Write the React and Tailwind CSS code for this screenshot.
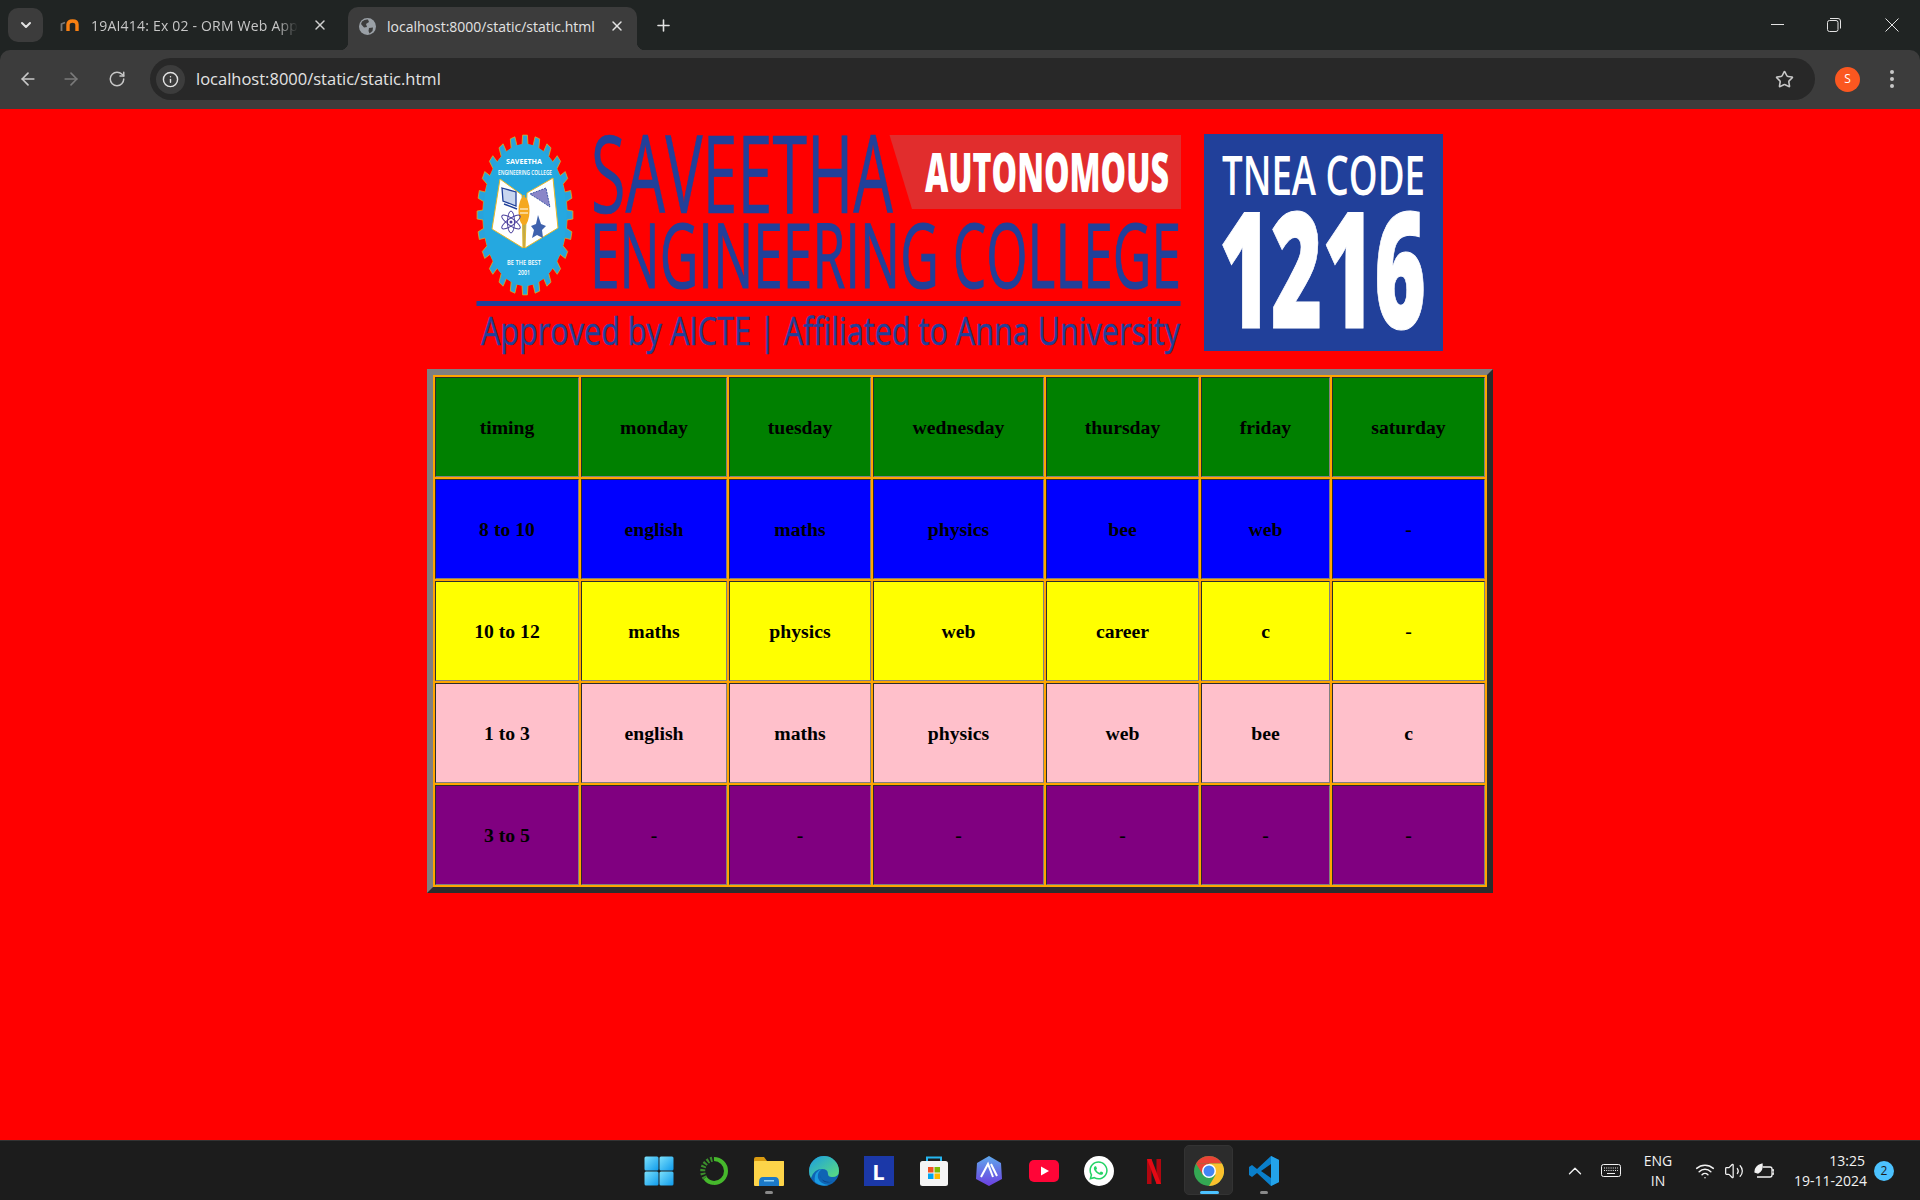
import React from 'react';
import {
  ArrowLeft,
  ArrowRight,
  ChevronDown,
  ChevronUp,
  Info,
  Plus,
  RotateCw,
  Star,
  Volume2,
  Wifi,
  X,
} from 'lucide-react';
import { FaWhatsapp } from 'react-icons/fa';

const BLUE = '#21409a';

const columns = ['w-[144px]', 'w-[146px]', 'w-[142px]', 'w-[171px]', 'w-[153px]', 'w-[129px]', 'w-[153px]'];

const rows = [
  { bg: 'bg-[#008000]', cells: ['timing', 'monday', 'tuesday', 'wednesday', 'thursday', 'friday', 'saturday'] },
  { bg: 'bg-[#0000ff]', cells: ['8 to 10', 'english', 'maths', 'physics', 'bee', 'web', '-'] },
  { bg: 'bg-[#ffff00]', cells: ['10 to 12', 'maths', 'physics', 'web', 'career', 'c', '-'] },
  { bg: 'bg-[#ffc0cb]', cells: ['1 to 3', 'english', 'maths', 'physics', 'web', 'bee', 'c'] },
  { bg: 'bg-[#800080]', cells: ['3 to 5', '-', '-', '-', '-', '-', '-'] },
];

// gear outline for the college crest, squashed like the stretched banner image
function gearPath(cx, cy, rx, ry, teeth) {
  const pts = [];
  for (let i = 0; i < teeth; i++) {
    const step = (Math.PI * 2) / teeth;
    const a = i * step - Math.PI / 2;
    const corners = [
      [a - step * 0.27, 0.88],
      [a - step * 0.19, 1],
      [a + step * 0.19, 1],
      [a + step * 0.27, 0.88],
    ];
    corners.forEach(([t, r]) => {
      pts.push(`${(cx + Math.cos(t) * rx * r).toFixed(1)},${(cy + Math.sin(t) * ry * r).toFixed(1)}`);
    });
  }
  return `M${pts.join('L')}Z`;
}

function Crest() {
  return (
    <g>
      <path d={gearPath(525, 215, 48, 80, 24)} fill="#29a3dc" stroke="#d8b020" strokeWidth="0.8" />
      <ellipse cx="525" cy="215" rx="42" ry="71" fill="#25a8e0" />
      <path d="M500 179 L522 195 L523 248 L492 229 Z" fill="#fff" stroke="#e8b82a" strokeWidth="1" />
      <path d="M527 193 L553 178 L558 228 L525 248 Z" fill="#fff" stroke="#e8b82a" strokeWidth="1" />
      <path d="M524 195 V248" stroke="#f2ab1e" strokeWidth="1.5" />
      <ellipse cx="524" cy="211" rx="5.5" ry="14" fill="#f5a81f" />
      <path d="M520 209 H528 M520 213 H528" stroke="#fff" strokeWidth="1.2" />
      {/* monitor */}
      <path d="M502 188 L516 192 V206 L503 201 Z" fill="#c9d6ef" stroke={BLUE} strokeWidth="1.3" />
      <path d="M504 204 L517 209" stroke={BLUE} strokeWidth="1.5" />
      {/* chip */}
      <path d="M530 194 L546 188 L550 207 L538 199 Z" fill="#8a86c8" stroke={BLUE} strokeWidth="0.8" strokeDasharray="2 1" />
      {/* atom */}
      <g fill="none" stroke="#4b3f9c" strokeWidth="1">
        <ellipse cx="511" cy="222" rx="3.5" ry="11" />
        <ellipse cx="511" cy="222" rx="3.5" ry="11" transform="rotate(55 511 222)" />
        <ellipse cx="511" cy="222" rx="3.5" ry="11" transform="rotate(-55 511 222)" />
      </g>
      <circle cx="511" cy="222" r="1.5" fill="#4b3f9c" />
      {/* star tower */}
      <path d="M538 215 L541 224 L546 226 L542 230 L543 238 L537 235 L532 238 L534 230 L531 226 L536 224 Z" fill="#3f62ad" />
      <text x="524" y="164" fontSize="7.5" fontWeight="700" fill="#fff" textAnchor="middle" textLength="36" lengthAdjust="spacingAndGlyphs">SAVEETHA</text>
      <text x="525" y="175" fontSize="6.5" fontWeight="600" fill="#fff" textAnchor="middle" textLength="54" lengthAdjust="spacingAndGlyphs">ENGINEERING COLLEGE</text>
      <text x="524" y="265" fontSize="7" fontWeight="600" fill="#fff" textAnchor="middle" textLength="34" lengthAdjust="spacingAndGlyphs">BE THE BEST</text>
      <text x="524" y="275" fontSize="6.5" fontWeight="600" fill="#fff" textAnchor="middle" textLength="12" lengthAdjust="spacingAndGlyphs">2001</text>
    </g>
  );
}

function Banner() {
  return (
    <svg
      viewBox="470 120 980 245"
      width="980"
      height="245"
      className="block font-['Open_Sans',sans-serif]"
    >
      <Crest />
      <polygon points="889.5,135 1181,135 1181,209 912,209" fill="#e12d2d" />
      <text x="591" y="213" fontSize="108" fontWeight="500" fill={BLUE} stroke={BLUE} strokeWidth="0.6" textLength="302" lengthAdjust="spacingAndGlyphs">SAVEETHA</text>
      <text x="590" y="288" fontSize="90" fontWeight="500" fill={BLUE} stroke={BLUE} strokeWidth="1" textLength="591" lengthAdjust="spacingAndGlyphs">ENGINEERING COLLEGE</text>
      <text x="925" y="192" fontSize="54" fontWeight="800" fill="#fff" textLength="244" lengthAdjust="spacingAndGlyphs">AUTONOMOUS</text>
      <rect x="476.5" y="301" width="704" height="5" fill={BLUE} />
      <text x="481" y="345" fontSize="39" fontWeight="500" fill={BLUE} stroke={BLUE} strokeWidth="0.5" textLength="699" lengthAdjust="spacingAndGlyphs">Approved by AICTE | Affiliated to Anna University</text>
      <rect x="1204" y="134" width="239" height="217" fill={BLUE} />
      <text x="1222" y="195" fontSize="54" fontWeight="600" fill="#fff" textLength="203" lengthAdjust="spacingAndGlyphs">TNEA CODE</text>
      <text x="1219" y="328" fontSize="161" fontWeight="800" fill="#fff" stroke="#fff" strokeWidth="1" textLength="207" lengthAdjust="spacingAndGlyphs">1216</text>
    </svg>
  );
}

function Timetable() {
  return (
    <table className="table-fixed w-[1066px] mx-auto border-separate border-spacing-[2px] bg-[#ffa500] border-[6px] border-[#808080] [border-style:outset] font-['Liberation_Serif',serif] text-[19.7px] font-bold text-black">
      <colgroup>
        {columns.map((c, i) => (
          <col key={i} className={c} />
        ))}
      </colgroup>
      <tbody>
        {rows.map((row, r) => (
          <tr key={r}>
            {row.cells.map((cell, c) => (
              <td
                key={c}
                className={`${row.bg} h-[100px] p-0 pt-[2px] text-center align-middle border border-[#808080] [border-style:inset]`}
              >
                {cell}
              </td>
            ))}
          </tr>
        ))}
      </tbody>
    </table>
  );
}

function MoodleIcon() {
  return (
    <svg viewBox="0 0 20 14" className="w-5 h-[14px]">
      <path d="M1.5 13 V6 L5 4.5" fill="none" stroke="#777" strokeWidth="1.8" />
      <path d="M8 13 V6.5 Q8 3 12.5 3 Q17 3 17 6.5 V13" fill="none" stroke="#f98012" strokeWidth="3.4" />
    </svg>
  );
}

function GlobeIcon() {
  return (
    <svg viewBox="0 0 17 17" className="ml-[11px] w-[17px] h-[17px]">
      <circle cx="8.5" cy="8.5" r="8.5" fill="#9aa0a6" />
      <path d="M3 3.5 Q6 1 9 1.5 L10 4 L7 6 L8 9 L5 9.5 L2 6 Z M10 10 L14 9.5 L13.5 13 L10.5 15.5 L9.5 13 Z" fill="#3c3c3c" />
    </svg>
  );
}

function TabBar() {
  return (
    <div className="flex h-[50px] bg-[#202423] text-[14px]">
      <div className="ml-2 mt-2 w-[35px] h-[34px] rounded-[10px] bg-[#3c3c3c] flex items-center justify-center">
        <ChevronDown size={16} strokeWidth={3} className="text-[#e3e3e3]" />
      </div>
      <div className="ml-[17px] w-[280px] h-[36px] mt-[7px] flex items-center text-[#c7c7c7]">
        <MoodleIcon />
        <span className="ml-[11px] w-[207px] whitespace-nowrap overflow-hidden tracking-[0.2px] [mask-image:linear-gradient(to_right,black_90%,transparent)]">
          19AI414: Ex 02 - ORM Web Application
        </span>
        <X size={16} strokeWidth={2.2} className="ml-[14px] text-[#d0d0d0]" />
      </div>
      <div className="relative ml-2 w-[289px] h-[43px] mt-[7px] pb-[5px] rounded-t-[10px] bg-[#3c3c3c] flex items-center text-[#e3e3e3]">
        <div className="absolute left-[-8px] bottom-0 w-2 h-2 bg-[radial-gradient(circle_at_0_0,#202423_8px,#3c3c3c_8.5px)]" />
        <div className="absolute right-[-8px] bottom-0 w-2 h-2 bg-[radial-gradient(circle_at_100%_0,#202423_8px,#3c3c3c_8.5px)]" />
        <GlobeIcon />
        <span className="ml-[11px] w-[210px] whitespace-nowrap overflow-hidden">localhost:8000/static/static.html</span>
        <X size={16} strokeWidth={2.2} className="ml-[12px] text-[#e3e3e3]" />
      </div>
      <div className="ml-[17px] mt-[15px] h-5 flex items-center">
        <Plus size={19} strokeWidth={2} className="text-[#e3e3e3]" />
      </div>
      <div className="ml-auto flex items-start pt-[18px] text-[#e3e3e3]">
        <div className="w-[13px] h-[13px] flex items-center">
          <div className="w-[13px] h-px bg-[#e3e3e3]" />
        </div>
        <svg viewBox="0 0 14 14" className="ml-[43px] w-[14px] h-[14px]" fill="none" stroke="currentColor" strokeWidth="1">
          <rect x="0.5" y="2.5" width="10.5" height="11" rx="2" />
          <path d="M3 0.5 H11 Q13.5 0.5 13.5 3 V10.5" />
        </svg>
        <svg viewBox="0 0 14 14" className="ml-[44px] mr-[21px] w-[14px] h-[14px]" fill="none" stroke="currentColor" strokeWidth="1">
          <path d="M0.5 0.5 L13.5 13.5 M13.5 0.5 L0.5 13.5" />
        </svg>
      </div>
    </div>
  );
}

function Toolbar() {
  return (
    <div className="bg-[#202423]">
      <div className="flex items-center h-[59px] pb-[1px] bg-[#3c3c3c] rounded-t-[10px] text-[#c7c7c7]">
        <ArrowLeft size={20} strokeWidth={2} className="ml-[18px]" />
        <ArrowRight size={20} strokeWidth={2} className="ml-[23px] text-[#7a7a7a]" />
        <RotateCw size={18} strokeWidth={2} className="ml-[27px]" />
        <div className="ml-[24px] w-[1665px] h-[42px] rounded-[21px] bg-[#282828] flex items-center">
          <div className="ml-[6px] w-[29px] h-[29px] rounded-full bg-[#3c3c3c] flex items-center justify-center">
            <Info size={17} strokeWidth={2} className="text-[#e3e3e3]" />
          </div>
          <span className="ml-[11px] text-[16.5px] text-[#e3e3e3] font-['Open_Sans',sans-serif]">localhost:8000/static/static.html</span>
          <Star size={19} strokeWidth={2} className="ml-auto mr-[21px] text-[#c7c7c7]" />
        </div>
        <div className="ml-[20px] w-[25px] h-[25px] rounded-full bg-[#fb5720] flex items-center justify-center text-[12px] text-white">S</div>
        <div className="ml-[30px] flex flex-col gap-[3px]">
          <div className="w-1 h-1 rounded-full bg-[#c7c7c7]" />
          <div className="w-1 h-1 rounded-full bg-[#c7c7c7]" />
          <div className="w-1 h-1 rounded-full bg-[#c7c7c7]" />
        </div>
      </div>
    </div>
  );
}

function WindowsIcon() {
  return (
    <svg viewBox="0 0 30 30" className="w-[30px] h-[30px]">
      <defs>
        <linearGradient id="winTile" x1="0" y1="0" x2="1" y2="1">
          <stop offset="0" stopColor="#7be0fb" />
          <stop offset="1" stopColor="#0f9bec" />
        </linearGradient>
      </defs>
      <rect x="0.5" y="0.5" width="14" height="14" rx="1.5" fill="url(#winTile)" />
      <rect x="15.5" y="0.5" width="14" height="14" rx="1.5" fill="url(#winTile)" />
      <rect x="0.5" y="15.5" width="14" height="14" rx="1.5" fill="url(#winTile)" />
      <rect x="15.5" y="15.5" width="14" height="14" rx="1.5" fill="url(#winTile)" />
    </svg>
  );
}

function RingIcon() {
  return (
    <svg viewBox="0 0 30 30" className="w-[30px] h-[30px]" fill="none">
      <path d="M15 3 A12 12 0 0 1 15 27" stroke="#46b82c" strokeWidth="4" />
      <path d="M15 27 A12 12 0 0 1 6 22" stroke="#46b82c" strokeWidth="4" />
      <path d="M6 22 A12 12 0 0 1 15 3" stroke="#3c8f2c" strokeWidth="5" strokeDasharray="2 1.6" />
    </svg>
  );
}

function FolderIcon() {
  return (
    <svg viewBox="0 0 30 30" className="w-[30px] h-[30px]">
      <path d="M0 3 Q0 1 2 1 H10 L13 5 H30 V10 H0 Z" fill="#d99a10" />
      <rect x="0" y="5" width="30" height="25" rx="1" fill="#fdd449" />
      <path d="M5 26 Q5 21 9 21 H21 Q25 21 25 26 V30 H5 Z" fill="#1b79c8" />
      <rect x="10" y="24" width="10" height="1.5" fill="#8fd0f5" />
    </svg>
  );
}

function EdgeIcon() {
  return (
    <svg viewBox="0 0 30 30" className="w-[30px] h-[30px]">
      <defs>
        <linearGradient id="edgeTop" x1="0" y1="0" x2="1" y2="1">
          <stop offset="0" stopColor="#1b9de2" />
          <stop offset="1" stopColor="#5ee07a" />
        </linearGradient>
      </defs>
      <circle cx="15" cy="15" r="15" fill="#0f64b4" />
      <path d="M0 15 A15 15 0 0 1 30 15 Q30 21 23 21 Q19 21 19 18 Q19 13 13 13 Q5 13 2 22 Q0 19 0 15 Z" fill="url(#edgeTop)" />
      <path d="M13 13 Q8 16 9 22 Q11 28 20 29 Q12 31 6 26 Q4 16 13 13 Z" fill="#1a9ae0" />
      <path d="M11 19 Q12 26 21 26 L24 25 Q14 30 11 19Z" fill="#0b3f80" />
    </svg>
  );
}

function LIcon() {
  return (
    <div className="w-[30px] h-[30px] bg-[#1b38a8] flex items-center justify-center text-white text-[22px] font-bold leading-none font-['Open_Sans',sans-serif]">L</div>
  );
}

function StoreIcon() {
  return (
    <svg viewBox="0 0 30 30" className="w-[30px] h-[30px]">
      <path d="M8 6 V1.5 H22 V6" fill="none" stroke="#25b6f0" strokeWidth="2" />
      <rect x="1" y="5" width="28" height="25" rx="2.5" fill="#f4f4f4" />
      <rect x="9" y="11" width="5.5" height="5.5" fill="#f25022" />
      <rect x="15.5" y="11" width="5.5" height="5.5" fill="#7fba00" />
      <rect x="9" y="17.5" width="5.5" height="5.5" fill="#00a4ef" />
      <rect x="15.5" y="17.5" width="5.5" height="5.5" fill="#ffb900" />
    </svg>
  );
}

function HexIcon() {
  return (
    <svg viewBox="0 0 30 30" className="w-[30px] h-[30px]">
      <defs>
        <linearGradient id="hexFill" x1="0" y1="0" x2="0" y2="1">
          <stop offset="0" stopColor="#5fa8ec" />
          <stop offset="1" stopColor="#6c3ee0" />
        </linearGradient>
      </defs>
      <polygon points="15,0 27,7 28,23 15,30 2,23 3,7" fill="url(#hexFill)" />
      <path d="M7 21 L14 8 L19 21 M17 8 L23 20" fill="none" stroke="#fff" strokeWidth="2" />
    </svg>
  );
}

function YoutubeIcon() {
  return (
    <svg viewBox="0 0 30 22" className="w-[30px] h-[22px]">
      <rect x="0" y="0" width="30" height="22" rx="5" fill="#ff0537" />
      <polygon points="12,6.5 20,11 12,15.5" fill="#fff" />
    </svg>
  );
}

function WhatsappIcon() {
  return (
    <div className="w-[30px] h-[30px] rounded-full bg-white flex items-center justify-center">
      <FaWhatsapp size={21} className="text-[#25d366]" />
    </div>
  );
}

function NetflixIcon() {
  return (
    <svg viewBox="0 0 14 30" className="w-[14px] h-[30px]">
      <rect x="0" y="3" width="4.5" height="25" fill="#b1060f" />
      <rect x="9.5" y="3" width="4.5" height="25" fill="#b1060f" />
      <polygon points="0,3 4.5,3 14,28 9.5,28" fill="#e50914" />
    </svg>
  );
}

function ChromeIcon() {
  return (
    <svg viewBox="0 0 30 30" className="w-[30px] h-[30px]">
      <circle cx="15" cy="15" r="15" fill="#34a853" />
      <path d="M15 0 A15 15 0 0 1 28 7.5 H15 Z M2 7.5 A15 15 0 0 1 15 0 V7.5 Z" fill="#ea4335" />
      <path d="M2 7.5 L9 19 L15 15 L15 7.5 Z" fill="#ea4335" />
      <path d="M28 7.5 A15 15 0 0 1 15 30 L21.5 19 L15 7.5 Z" fill="#fbc02d" />
      <circle cx="15" cy="15" r="7" fill="#fff" />
      <circle cx="15" cy="15" r="5.5" fill="#4285f4" />
    </svg>
  );
}

function VscodeIcon() {
  return (
    <svg viewBox="0 0 30 30" className="w-[30px] h-[30px]">
      <path d="M22 0 L30 4 V26 L22 30 L8 17 L3 21 L0 19 V11 L3 9 L8 13 Z" fill="#0a7fcb" />
      <path d="M22 0 L30 4 V26 L22 30 Z" fill="#23a3ea" />
      <path d="M22 8 V22 L12 15 Z" fill="#1c1c1c" />
    </svg>
  );
}

function KeyboardIcon() {
  return (
    <svg viewBox="0 0 20 13" className="ml-[15px] w-5 h-[13px]" fill="none" stroke="currentColor">
      <rect x="0.5" y="0.5" width="19" height="12" rx="2" />
      <path d="M3 4 H17 M3 6.5 H17" strokeDasharray="1 1.2" />
      <path d="M6 9.5 H14" />
    </svg>
  );
}

const taskbarApps = [
  { icon: <WindowsIcon /> },
  { icon: <RingIcon /> },
  { icon: <FolderIcon />, state: 'open' },
  { icon: <EdgeIcon /> },
  { icon: <LIcon /> },
  { icon: <StoreIcon /> },
  { icon: <HexIcon /> },
  { icon: <YoutubeIcon /> },
  { icon: <WhatsappIcon /> },
  { icon: <NetflixIcon /> },
  { icon: <ChromeIcon />, state: 'active' },
  { icon: <VscodeIcon />, state: 'open' },
];

function Taskbar() {
  return (
    <div className="relative h-[60px] bg-[#1c1c1c] border-t border-[#333333] flex items-center font-['Open_Sans',sans-serif] text-[#f2f2f2]">
      <div className="ml-[631px] flex">
        {taskbarApps.map((app, i) => (
          <div key={i} className="relative w-[55px] h-[59px] flex items-center justify-center">
            {app.state === 'active' && (
              <>
                <div className="absolute left-[3px] top-[4px] w-[49px] h-[50px] rounded-[5px] bg-[#2c2c2c] border border-[#333333]" />
                <div className="absolute left-[19px] bottom-[6px] w-[19px] h-[3px] rounded-full bg-[#4cc2ff]" />
              </>
            )}
            {app.state === 'open' && (
              <div className="absolute left-[24px] bottom-[6px] w-2 h-[3px] rounded-full bg-[#8a8a8a]" />
            )}
            <div className="relative">{app.icon}</div>
          </div>
        ))}
      </div>
      <ChevronUp size={22} strokeWidth={1.5} className="ml-[273px]" />
      <KeyboardIcon />
      <div className="ml-[22px] w-[30px] text-center text-[14px] leading-[20px] whitespace-nowrap">
        <div>ENG</div>
        <div>IN</div>
      </div>
      <Wifi size={20} strokeWidth={1.8} className="ml-[22px]" />
      <Volume2 size={20} strokeWidth={1.5} className="ml-[9px]" />
      <svg viewBox="0 0 20 16" className="ml-[10px] w-5 h-4" fill="none" stroke="currentColor" strokeWidth="1.3">
        <path d="M3 14 H16 Q18 14 18 12 V6 Q18 4 16 4 H9" />
        <path d="M18 7 H20 V11 H18" />
        <path d="M1 9 Q1 3 8 1 Q9 7 4 10 Z" fill="currentColor" />
      </svg>
      <div className="ml-[20px] w-[71px] text-right text-[14px] leading-[20px] whitespace-nowrap">
        <div>13:25</div>
        <div>19-11-2024</div>
      </div>
      <div className="ml-[9px] w-5 h-5 rounded-full bg-[#4cc2ff] flex items-center justify-center text-[12px] text-[#1c1c1c]">2</div>
    </div>
  );
}

export default function App() {
  return (
    <div className="w-full h-screen flex flex-col overflow-hidden font-['Open_Sans',sans-serif]">
      <TabBar />
      <Toolbar />
      <main className="flex-1 bg-[#ff0000] pt-[11px]">
        <div className="flex justify-center mb-[4px]">
          <Banner />
        </div>
        <Timetable />
      </main>
      <Taskbar />
    </div>
  );
}
